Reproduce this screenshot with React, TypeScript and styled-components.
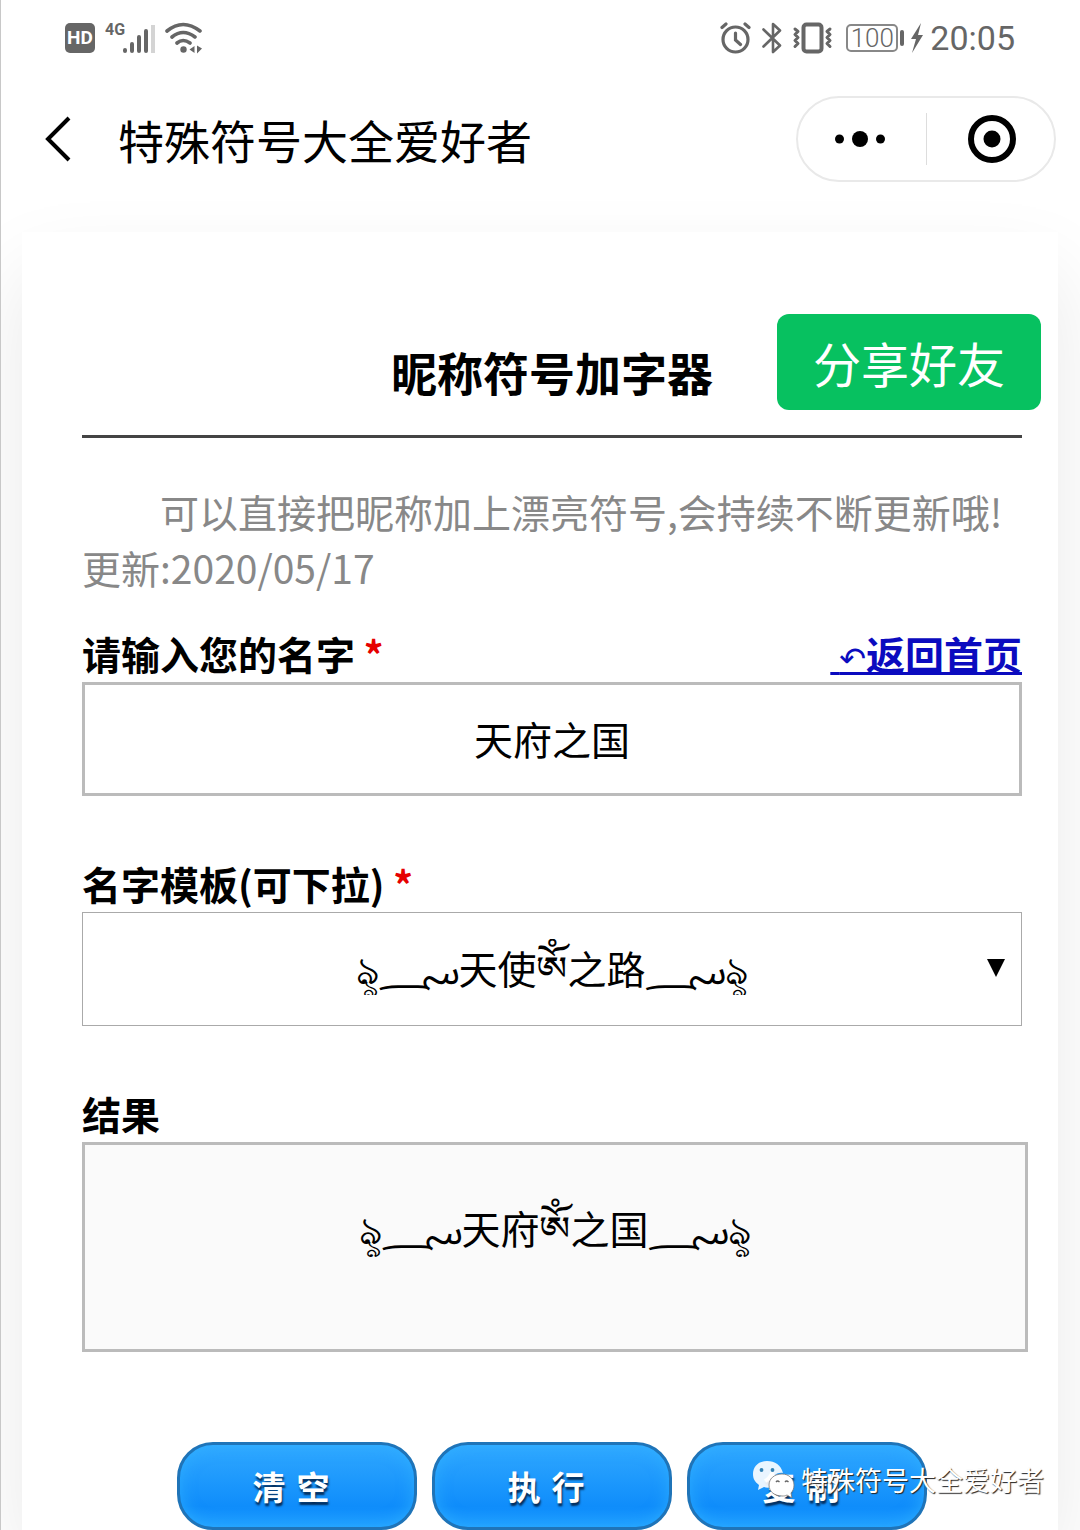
import React, { useState } from "react";
import styled, { createGlobalStyle } from "styled-components";

const FONT =
  '"Noto Sans CJK SC", "Noto Sans Arabic", "Noto Sans", "DejaVu Sans", sans-serif';
const GREY = "#666";

const GlobalStyle = createGlobalStyle`
  *, *::before, *::after { box-sizing: border-box; }
  body { margin: 0; background: #fff; font-family: ${FONT}; color: #000; }
  button, input, select, textarea { font: inherit; color: inherit; }
`;

const Page = styled.div`
  position: relative;
  display: flex;
  flex-direction: column;
  min-height: 100vh;
  overflow: hidden;
  border-left: 1px solid #c8c8c8;
`;

const StatusBar = styled.div`
  display: flex;
  justify-content: space-between;
  align-items: center;
  height: 76px;
  padding: 0 65px 0 64px;
  color: ${GREY};
  font-family: Roboto, "Liberation Sans", sans-serif;
`;

const StatusGroup = styled.div<{ $gap: number }>`
  display: flex;
  align-items: center;
  gap: ${(p) => p.$gap}px;
`;

const HdBadge = styled.span`
  width: 30px;
  height: 30px;
  border-radius: 5px;
  background: ${GREY};
  color: #fff;
  font-size: 19px;
  font-weight: 700;
  line-height: 30px;
  text-align: center;
`;

const Signal = styled.div`
  display: flex;
  align-items: flex-start;
`;

const SignalBars = styled.svg`
  margin-left: -4px;
`;

const Network = styled.span`
  font-size: 16px;
  font-weight: 700;
  line-height: 16px;
`;

const Battery = styled.div`
  display: flex;
  align-items: center;
  gap: 2px;
  margin-left: 6px;
`;

const BatteryBody = styled.span`
  width: 52px;
  height: 28px;
  border: 2px solid #888;
  border-radius: 5px;
  font-size: 26px;
  font-weight: 300;
  line-height: 24px;
  text-align: center;
`;

const BatteryTip = styled.span`
  width: 4px;
  height: 16px;
  border-radius: 2px;
  background: ${GREY};
`;

const Clock = styled.time`
  font-size: 34px;
  line-height: 40px;
`;

const NavBar = styled.header`
  display: flex;
  align-items: center;
  height: 126px;
  padding: 0 24px 0 35px;
`;

const BackButton = styled.button`
  display: flex;
  width: 44px;
  height: 64px;
  padding: 0;
  align-items: center;
  justify-content: center;
  border: 0;
  background: none;
`;

const NavTitle = styled.h1`
  flex: 1;
  margin: 0 0 0 38px;
  font-size: 46px;
  font-weight: 400;
  line-height: 64px;
`;

const Capsule = styled.div`
  display: flex;
  align-items: center;
  width: 260px;
  height: 86px;
  border: 2px solid #e9e9e9;
  border-radius: 43px;
`;

const CapsuleButton = styled.button`
  display: flex;
  flex: 1;
  height: 52px;
  padding: 0 4px 0 0;
  align-items: center;
  justify-content: center;
  border: 0;
  background: none;

  & + & {
    padding: 0 0 0 4px;
    border-left: 1px solid #ddd;
  }
`;

const Card = styled.main`
  position: relative;
  flex: 1;
  margin: 30px 22px 0 21px;
  padding: 107px 36px 0 60px;
  background: #fff;
  box-shadow: 0 40px 80px rgba(0, 0, 0, 0.09);
`;

const Content = styled.form`
  display: flex;
  flex-direction: column;
`;

const Heading = styled.h2`
  margin: 0;
  padding-bottom: 32px;
  border-bottom: 3px solid #444;
  font-size: 46px;
  font-weight: 700;
  line-height: 64px;
  text-align: center;
`;

const ShareButton = styled.button`
  position: absolute;
  top: 82px;
  right: 17px;
  width: 264px;
  height: 96px;
  padding: 0;
  border: 0;
  border-radius: 12px;
  background: #07c160;
  color: #fff;
  font-size: 48px;
`;

const Intro = styled.p`
  margin: 45px 0 33px;
  color: #888;
  font-size: 39px;
  line-height: 56px;
  text-indent: 2em;
`;

const Field = styled.div`
  display: flex;
  flex-direction: column;
  margin-bottom: 62px;
`;

const FieldHead = styled.div`
  display: flex;
  justify-content: space-between;
  padding-bottom: 4px;
  font-size: 39px;
  font-weight: 700;
  line-height: 50px;
`;

const Required = styled.span`
  color: #e60000;
`;

const HomeLink = styled.a`
  color: #0b0bbf;
  text-decoration: underline;
  white-space: pre;
`;

const LinkArrow = styled.span`
  font-family: "DejaVu Sans", sans-serif;
  font-size: 32px;
  font-weight: 400;
  line-height: 32px;
`;

const TextInput = styled.input`
  width: 100%;
  height: 114px;
  padding: 0 16px 2px;
  border: 3px solid #bbb;
  border-radius: 0;
  background: #fff;
  font-size: 39px;
  text-align: center;
  outline: 0;
`;

const SelectWrap = styled.div`
  position: relative;
`;

const Select = styled.select`
  display: block;
  width: 100%;
  height: 114px;
  padding: 0 16px 4px;
  appearance: none;
  border: 1px solid #aaa;
  border-radius: 0;
  background: #fff;
  font-size: 39px;
  text-align: center;
  text-align-last: center;
`;

const SelectArrow = styled.svg`
  position: absolute;
  top: 47px;
  right: 17px;
  pointer-events: none;
`;

const Result = styled.textarea`
  display: block;
  height: 210px;
  margin-right: -6px;
  padding: 54px 16px 0;
  border: 3px solid #bbb;
  border-radius: 0;
  background: #fafafa;
  font-size: 39px;
  line-height: 56px;
  text-align: center;
  resize: none;
  outline: 0;
`;

const Actions = styled.div`
  display: flex;
  justify-content: center;
  gap: 15px;
  margin-top: 28px;
`;

const ActionButton = styled.button`
  width: 240px;
  height: 88px;
  padding: 0 12px 0 0;
  border: 3px solid #1f74b8;
  border-radius: 36px;
  background: linear-gradient(#30a8ff, #0f8dfb 75%, #1e9dff);
  box-shadow: inset 0 0 16px rgba(50, 180, 255, 0.7);
  color: #fff;
  font-size: 33px;
  font-weight: 700;
  text-shadow: 1px 3px 2px rgba(0, 20, 50, 0.8);
`;

const Watermark = styled.div`
  position: absolute;
  right: 36px;
  bottom: 30px;
  display: flex;
  align-items: center;
  gap: 6px;
  color: #fff;
  font-size: 27px;
  line-height: 40px;
  text-shadow: 1px 1px 1px #222;
`;

function SignalIcon() {
  return (
    <SignalBars width="34" height="32" viewBox="0 0 34 32" fill="none" strokeLinecap="round" strokeWidth="4">
      <path d="M4 28v1M11 22v7M18 15v14M25 9v20" stroke={GREY} />
      <path d="M32 3v28" stroke="#d4d4d4" strokeLinecap="butt" />
    </SignalBars>
  );
}

function WifiIcon() {
  return (
    <svg width="38" height="32" viewBox="0 0 38 32" fill="none" stroke={GREY} strokeWidth="3.6" strokeLinecap="round">
      <path d="M2 9Q18 -4 35 9M7 15Q18 6 30 15M12 21Q18 16 25 21" />
      <circle cx="18.500" cy="27.500" r="3.200" fill={GREY} stroke="none" />
      <path d="M29.500 24v7l-5-3.500zM32 23.500v8l5-5z" fill={GREY} stroke="none" />
    </svg>
  );
}

function AlarmIcon() {
  return (
    <svg width="36" height="32" viewBox="0 0 36 32" fill="none" stroke={GREY} strokeWidth="3.200" strokeLinecap="round">
      <circle cx="15.500" cy="17.500" r="12.500" />
      <path d="M15.500 11v7l5 4.500M2 5.500l4-3.500M29 5.500l-4-3.500" />
    </svg>
  );
}

function BluetoothIcon() {
  return (
    <svg width="24" height="32" viewBox="0 0 24 32" fill="none" stroke={GREY} strokeWidth="2.600" strokeLinejoin="round" strokeLinecap="round">
      <path d="M1.500 7.500L18 23.500l-7 6.500V2l7 6.500L1.500 24.500" />
    </svg>
  );
}

function VibrateIcon() {
  return (
    <svg width="42" height="32" viewBox="0 0 42 32" fill="none" stroke={GREY} strokeLinecap="round" strokeLinejoin="round">
      <rect x="11.500" y="2.500" width="18" height="27" rx="3" strokeWidth="4" />
      <path d="M3 7l3 2.500-3 3 3 3-3 3 3 3-3 3M38 7l-3 2.500 3 3-3 3 3 3-3 3 3 3" strokeWidth="3" />
    </svg>
  );
}

function WeChatIcon() {
  return (
    <svg width="43" height="40" viewBox="0 0 43 40" fill="#fff">
      <path d="M15 1C6 1 1 7 1 14c0 5 2 8 6 11l-1 5 6-3c2 1 5 1 7 0C18 17 24 12 31 13 29 5 23 1 15 1z" opacity=".9" />
      <path d="M30 14c-8 0-13 5-13 11 0 7 6 11 13 11 2 0 3 0 5-1l5 3-1-5c2-2 3-5 3-8 0-6-5-11-12-11z" stroke="#777" strokeWidth=".8" />
      <g fill="#3383b5">
        <circle cx="9.500" cy="10" r="1.900" />
        <circle cx="20.500" cy="10" r="1.900" />
      </g>
      <path d="M24 22q1.500-2 3.500 0M33 22q1.500-2 3.500 0" fill="none" stroke="#666" strokeWidth="1.300" />
    </svg>
  );
}

const PREFIX = "\u09E1\u0604";
const SUFFIX = "\u0604\u09E1";
const decorate = (name: string) => `${PREFIX}${name.slice(0, 2)}\u0F00${name.slice(2)}${SUFFIX}`;
const TEMPLATE = decorate("天使之路");
const DEFAULT_NAME = "天府之国";

export default function App() {
  const [name, setName] = useState(DEFAULT_NAME);
  const [result, setResult] = useState(decorate(DEFAULT_NAME));
  const clear = () => {
    setName("");
    setResult("");
  };

  return (
    <Page>
      <GlobalStyle />
      <StatusBar>
        <StatusGroup $gap={10}>
          <HdBadge>HD</HdBadge>
          <Signal>
            <Network>4G</Network>
            <SignalIcon />
          </Signal>
          <WifiIcon />
        </StatusGroup>
        <StatusGroup $gap={6}>
          <AlarmIcon />
          <BluetoothIcon />
          <VibrateIcon />
          <Battery>
            <BatteryBody>100</BatteryBody>
            <BatteryTip />
          </Battery>
          <svg width="14" height="32" viewBox="0 0 14 32" fill={GREY}>
            <path d="M11 1L1 17h5L2 31 13 13H8z" />
          </svg>
          <Clock>20:05</Clock>
        </StatusGroup>
      </StatusBar>

      <NavBar>
        <BackButton type="button" aria-label="返回">
          <svg width="28" height="46" viewBox="0 0 28 46" fill="none" stroke="#000" strokeWidth="4">
            <path d="M25 2L4 23l21 21" />
          </svg>
        </BackButton>
        <NavTitle>特殊符号大全爱好者</NavTitle>
        <Capsule>
          <CapsuleButton type="button" aria-label="更多">
            <svg width="50" height="16" viewBox="0 0 50 16">
              <circle cx="4.500" cy="8" r="4.500" />
              <circle cx="25" cy="8" r="8" />
              <circle cx="45.500" cy="8" r="4.500" />
            </svg>
          </CapsuleButton>
          <CapsuleButton type="button" aria-label="关闭">
            <svg width="48" height="48" viewBox="0 0 48 48">
              <circle cx="24" cy="24" r="21" fill="none" stroke="#000" strokeWidth="6" />
              <circle cx="24" cy="24" r="8.500" />
            </svg>
          </CapsuleButton>
        </Capsule>
      </NavBar>

      <Card>
        <ShareButton type="button">分享好友</ShareButton>
        <Content onSubmit={(e) => e.preventDefault()}>
          <Heading>昵称符号加字器</Heading>
          <Intro>可以直接把昵称加上漂亮符号,会持续不断更新哦!更新:2020/05/17</Intro>
          <Field>
            <FieldHead>
              <label htmlFor="name">
                请输入您的名字 <Required>*</Required>
              </label>
              <HomeLink href="#home">
                {" "}
                <LinkArrow>↶</LinkArrow>返回首页
              </HomeLink>
            </FieldHead>
            <TextInput id="name" value={name} onChange={(e) => setName(e.target.value)} />
          </Field>
          <Field>
            <FieldHead>
              <label htmlFor="template">
                名字模板(可下拉) <Required>*</Required>
              </label>
            </FieldHead>
            <SelectWrap>
              <Select id="template" defaultValue={TEMPLATE}>
                <option value={TEMPLATE}>{TEMPLATE}</option>
              </Select>
              <SelectArrow width="18" height="18" viewBox="0 0 18 18">
                <path d="M0 0h18L9 18z" />
              </SelectArrow>
            </SelectWrap>
          </Field>
          <Field>
            <FieldHead>
              <label htmlFor="result">结果</label>
            </FieldHead>
            <Result id="result" readOnly value={result} />
          </Field>
          <Actions>
            <ActionButton type="button" onClick={clear}>清{"\u2004"}空</ActionButton>
            <ActionButton type="button" onClick={() => setResult(decorate(name))}>执{"\u2004"}行</ActionButton>
            <ActionButton type="button">复{"\u2004"}制</ActionButton>
          </Actions>
        </Content>
      </Card>

      <Watermark>
        <WeChatIcon />
        <span>特殊符号大全爱好者</span>
      </Watermark>
    </Page>
  );
}
